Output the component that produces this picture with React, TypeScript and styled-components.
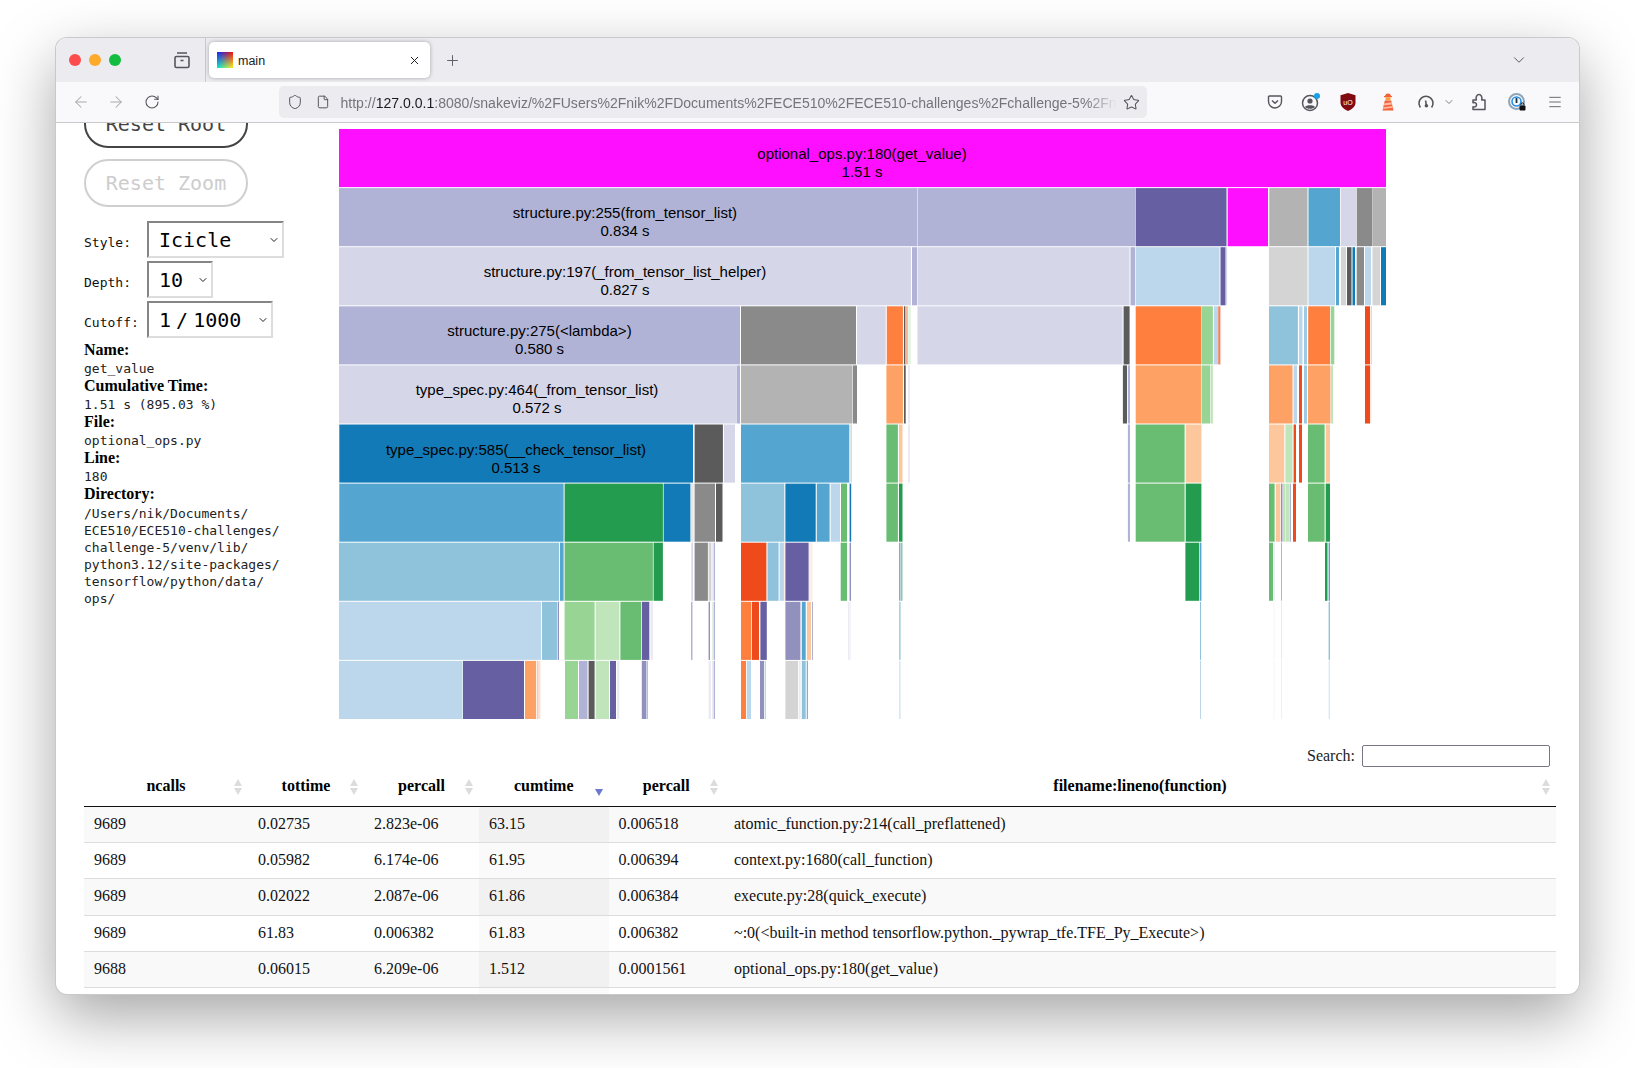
import * as React from 'react';
import styled, { createGlobalStyle } from 'styled-components';
import { ArrowLeft, ArrowRight, ChevronDown, File, Menu, Plus, RotateCw, Shield, Star, X } from 'lucide-react';

const GlobalStyle = createGlobalStyle`
  html, body {
    margin: 0;
    padding: 0;
    background: #fff;
  }
`;

const MONO = '"DejaVu Sans Mono", "Liberation Mono", monospace';
const SERIF = '"Liberation Serif", serif';
const SANS = '"Liberation Sans", Arial, sans-serif';

const Stage = styled.div`
  width: 1635px;
  height: 1068px;
  padding: 38px 56px 74px;
  box-sizing: border-box;
  overflow: hidden;
`;

const Window = styled.div`
  height: 956px;
  border-radius: 11px;
  overflow: hidden;
  background: #fff;
  box-shadow: 0 0 0 1px #c9c9cb, 0 22px 62px rgba(0, 0, 0, 0.36);
  display: flex;
  flex-direction: column;
`;

const TabBar = styled.div`
  height: 44px;
  flex: none;
  display: flex;
  align-items: center;
  background: #ecebf0;
  box-sizing: border-box;
  padding-left: 13px;
`;

const Light = styled.span<{ $color: string }>`
  width: 12px;
  height: 12px;
  border-radius: 50%;
  margin-right: 8px;
  background: ${(p) => p.$color};
`;

const ViewButton = styled.div`
  width: 20px;
  height: 20px;
  margin-left: 43px;
  color: #55555d;
`;

const TabDivider = styled.div`
  width: 1px;
  height: 44px;
  margin-left: 13px;
  background: #c9c9ce;
`;

const Tab = styled.div`
  width: 221px;
  height: 36px;
  margin-left: 3px;
  box-sizing: border-box;
  padding: 0 9px 0 8px;
  border-radius: 5px;
  background: #fff;
  box-shadow: 0 0 4px rgba(0, 0, 0, 0.3);
  display: flex;
  align-items: center;
  font: 12.5px ${SANS};
  color: #1c1b22;
`;

const Favicon = styled.span`
  position: relative;
  width: 16px;
  height: 16px;
  margin-right: 5px;
  background: linear-gradient(to right, #0a2bff, #f01010);
  &::after {
    content: '';
    position: absolute;
    inset: 0;
    background: linear-gradient(to right, #00e8d0, #f8f020);
    mask-image: linear-gradient(to bottom, transparent, #000);
    -webkit-mask-image: linear-gradient(to bottom, transparent, #000);
  }
`;

const TabTitle = styled.span`
  flex: 1;
  padding-top: 2px;
`;

const NewTab = styled.div`
  margin-left: 14px;
  color: #55555d;
  display: flex;
`;

const TabMenu = styled.div`
  margin-left: auto;
  margin-right: 51px;
  color: #55555d;
  display: flex;
`;

const Toolbar = styled.div`
  height: 41px;
  flex: none;
  box-sizing: border-box;
  padding-left: 7px;
  border-bottom: 1px solid #c9c9cb;
  background: #f9f9fb;
  display: flex;
  align-items: center;
`;

const Slot = styled.div<{ $w: number; $color?: string; $gap?: number }>`
  width: ${(p) => p.$w}px;
  height: 24px;
  flex: none;
  margin-left: ${(p) => p.$gap || 0}px;
  display: flex;
  align-items: center;
  justify-content: center;
  color: ${(p) => p.$color || '#55555d'};
`;

const UrlBar = styled.div`
  width: 868px;
  height: 32px;
  flex: none;
  margin: 0 110px 0 109px;
  box-sizing: border-box;
  padding-left: 7px;
  border-radius: 5px;
  background: #ecebef;
  display: flex;
  align-items: center;
  color: #55555d;
`;

const UrlText = styled.div`
  width: 776px;
  margin-left: 9px;
  padding-top: 2px;
  flex: none;
  overflow: hidden;
  white-space: nowrap;
  font: 14.05px ${SANS};
  color: #74747c;
  -webkit-mask-image: linear-gradient(to right, #000 96%, transparent 100%);
  mask-image: linear-gradient(to right, #000 96%, transparent 100%);
`;

const UrlHost = styled.span`
  color: #1c1b22;
`;

const Page = styled.div`
  flex: 1;
  min-height: 0;
  overflow: hidden;
  padding-left: 28px;
  padding-right: 23px;
`;

const Top = styled.div`
  display: flex;
  align-items: flex-start;
`;

const Sidebar = styled.div`
  width: 255px;
  flex: none;
  margin-top: -23px;
`;

const Button = styled.button<{ $off?: boolean }>`
  display: block;
  width: 164px;
  height: 48px;
  margin-bottom: 11px;
  padding: 0;
  background: #fff;
  border: 2px solid ${(p) => (p.$off ? '#cfcfcf' : '#444')};
  border-radius: 24px;
  font: 20px ${MONO};
  color: ${(p) => (p.$off ? '#cdcdcd' : '#444')};
`;

const Controls = styled.div`
  padding-top: 3px;
`;

const Field = styled.div`
  display: flex;
  align-items: baseline;
  margin-bottom: 3px;
`;

const FieldLabel = styled.label`
  width: 63px;
  flex: none;
  font: 13px ${MONO};
  color: #111;
`;

const SelectBox = styled.div<{ $w: number }>`
  position: relative;
  width: ${(p) => p.$w}px;
  height: 37px;
`;

const Select = styled.select<{ $tight?: boolean }>`
  width: 100%;
  height: 100%;
  box-sizing: border-box;
  appearance: none;
  background: #fff;
  border-radius: 0;
  border-width: 2px;
  border-style: solid;
  border-color: #858585 #ddd #ddd #858585;
  padding: 0 0 0 10px;
  font: 20px ${MONO};
  color: #000;
  word-spacing: ${(p) => (p.$tight ? '-7px' : '0')};
`;

const Caret = styled.span`
  position: absolute;
  right: 4px;
  top: 13px;
  display: flex;
  color: #222;
  pointer-events: none;
`;

const Info = styled.div`
  margin-top: 1px;
`;

const InfoLabel = styled.div`
  font: bold 16px/18px ${SERIF};
  color: #000;
`;

const InfoValue = styled.div`
  font: 13px/18px ${MONO};
  color: #222;
  padding-top: 1px;
  margin-bottom: -1px;
`;

const DirList = styled.div`
  margin-top: 2px;
`;

const DirLine = styled.div`
  font: 13px/17px ${MONO};
  color: #222;
`;

const Chart = styled.svg`
  display: block;
  flex: none;
  margin-top: 6px;
`;

const ChartLabel = styled.text`
  font: 15px ${SANS};
  fill: #000;
  text-anchor: middle;
`;

const SearchRow = styled.div`
  margin-top: 25px;
  padding-right: 6px;
  display: flex;
  justify-content: flex-end;
  align-items: center;
  gap: 7px;
  font: 16px ${SERIF};
  color: #222;
`;

const SearchInput = styled.input`
  width: 188px;
  height: 22px;
  box-sizing: border-box;
  border: 1px solid #767686;
  border-radius: 2px;
  background: #fff;
  padding: 0 4px;
`;

const Table = styled.table`
  width: 1472px;
  table-layout: fixed;
  border-collapse: separate;
  border-spacing: 0;
  font: 16px ${SERIF};
  color: #111;
`;

const Head = styled.th`
  position: relative;
  height: 40px;
  box-sizing: border-box;
  padding: 0 0 2px;
  border-bottom: 1px solid #111;
  font: bold 16px ${SERIF};
  color: #000;
  text-align: center;
`;

const Arrows = styled.svg`
  position: absolute;
  right: 5px;
  top: 12px;
`;

const Row = styled.tr``;

const Cell = styled.td<{ $odd: boolean; $sorted?: boolean }>`
  height: 36.2px;
  box-sizing: border-box;
  padding: 0 0 1px 10px;
  border-bottom: 1px solid #ddd;
  white-space: nowrap;
  background: ${(p) =>
    p.$sorted ? (p.$odd ? '#f1f1f1' : '#fafafa') : p.$odd ? '#f9f9f9' : '#fff'};
`;

const MAGENTA = '#ff0fff';
const LAV = '#b1b3d6';
const LTLAV = '#d5d6e8';
const PURPLE = '#6660a3';
const MPURPLE = '#9290bd';
const G3 = '#b3b3b3';
const G8 = '#8a8a8a';
const G5 = '#5b5b5b';
const GD = '#d4d4d4';
const BLUE = '#54a6d0';
const DBLUE = '#127ab6';
const LBLUE = '#bcd7ec';
const MBLUE = '#8fc3dc';
const ORANGE = '#fe7f3e';
const LORANGE = '#fda264';
const PEACH = '#fdc79e';
const RED = '#ee4a1b';
const DGREEN = '#249c4f';
const GREEN = '#69bd72';
const LGREEN = '#98d594';
const PGREEN = '#c0e5bb';
const PALE = '#ecebf3';
const PALEB = '#dbe8f3';

type Block = [number, number, string];

const ROWS: Block[][] = [
  [[339, 1386, MAGENTA]],
  [
    [339, 917, LAV], [917.5, 1135, LAV], [1135.6, 1226.5, PURPLE], [1227.7, 1268, MAGENTA],
    [1269.3, 1307.5, G3], [1308.5, 1340, BLUE], [1340.7, 1356, LTLAV], [1356.7, 1372.5, G8], [1373, 1386, G3],
  ],
  [
    [339, 911, LTLAV], [912, 917, LAV], [917.5, 1129.5, LTLAV], [1130.5, 1135, LAV],
    [1135.6, 1219.5, LBLUE], [1220.5, 1225.5, PURPLE], [1226, 1227, LTLAV],
    [1269, 1307.5, GD], [1308.5, 1335, LBLUE], [1336, 1339, BLUE], [1341, 1346, GD], [1347, 1351.5, G5],
    [1352.5, 1355, DBLUE], [1356.7, 1364, G8], [1365, 1371, LBLUE], [1372.5, 1380, GD], [1381, 1386, DBLUE],
  ],
  [
    [339, 740, LAV], [741, 856, G8], [857, 885.7, LTLAV], [886.8, 902.9, ORANGE], [904, 905.4, G5],
    [905.6, 907.9, '#f5b49a'], [908, 911, '#e6f4e4'], [917.5, 1122.5, LTLAV], [1123.6, 1129.6, G5],
    [1135.7, 1201.4, ORANGE], [1202, 1212.9, LGREEN], [1214, 1218, LBLUE], [1218.2, 1220.4, '#f2825c'],
    [1269, 1297.9, MBLUE], [1299, 1302.5, LBLUE], [1304, 1307, '#9fcbe2'], [1308.2, 1330, ORANGE],
    [1330.7, 1334.3, LGREEN], [1365, 1370, RED], [1370.7, 1372, '#fbd3bd'],
  ],
  [
    [339, 736, LTLAV], [736.5, 740, LAV], [741, 852.5, G3], [853, 857, G8], [886.4, 902.9, LORANGE],
    [904, 905.7, G5], [908, 910, PALE], [1122.9, 1127, G5], [1127.9, 1130, LAV],
    [1135.7, 1201.4, LORANGE], [1202, 1210, LGREEN], [1210.4, 1212.9, PGREEN], [1269, 1292.5, LORANGE],
    [1293.6, 1297, LBLUE], [1299, 1302, RED], [1304, 1307, '#9fcbe2'], [1308, 1330.4, LORANGE],
    [1331, 1333, PGREEN], [1365, 1370, RED], [1370.5, 1371.3, '#fbd3bd'],
  ],
  [
    [339.3, 693, DBLUE], [694.6, 722.9, G5], [724, 735, LTLAV], [741, 849.3, BLUE], [850.4, 851.8, GD],
    [886.4, 897.9, GREEN], [899, 902.5, PEACH], [908, 910, PALE], [1127.9, 1130, LAV], [1135.7, 1184.6, GREEN],
    [1185.7, 1201.4, PEACH], [1269, 1284.3, PEACH], [1285.4, 1292.5, PGREEN], [1293.6, 1296, RED],
    [1299, 1302, RED], [1308, 1324.6, GREEN], [1325.7, 1330, PEACH],
  ],
  [
    [339.3, 563.6, BLUE], [564.6, 662.9, DGREEN], [663.6, 690.4, DBLUE], [691, 693.6, '#e3e8e5'], [694.6, 715, G8],
    [716, 722.5, G5], [741, 784.3, MBLUE], [785.4, 815.7, DBLUE], [816.8, 829.6, BLUE], [830.7, 840, LBLUE],
    [841, 847, GREEN], [849.6, 851.2, DBLUE], [886.4, 897.9, GREEN], [899, 902.5, DGREEN], [1127.9, 1130, LAV],
    [1135.7, 1184.6, GREEN], [1185.7, 1201.4, DGREEN], [1269, 1274.6, GREEN], [1275.7, 1280.4, PEACH],
    [1281, 1282.5, MPURPLE], [1283, 1285.4, PGREEN], [1285.7, 1289, PGREEN], [1289.6, 1291, LAV],
    [1293, 1296, RED], [1308, 1324.6, GREEN], [1325.7, 1330, DGREEN],
  ],
  [
    [339, 559, MBLUE], [560, 563.6, BLUE], [564.6, 652.9, GREEN], [653.6, 662.9, DGREEN], [691.4, 693, LTLAV],
    [694.6, 707.9, G8], [708.6, 711.4, GD], [712, 713, PALE], [713.6, 715, LAV], [741, 766.4, RED],
    [767.5, 778.6, MBLUE], [779.6, 783, LBLUE], [783, 784.3, '#f8c9b0'], [785.4, 808.6, PURPLE],
    [809, 812.5, '#fbeee8'], [840.7, 847, GREEN], [849.6, 851, MPURPLE], [899, 900.4, '#8ea6d8'],
    [900.7, 902.5, '#8cc4ae'], [1185.4, 1199.3, DGREEN], [1200, 1201.4, BLUE], [1269, 1273, GREEN],
    [1273.5, 1275, PALE], [1281, 1282, LAV], [1325, 1327.5, DGREEN], [1328.6, 1330, BLUE],
  ],
  [
    [339, 541, LBLUE], [542, 557.5, MBLUE], [558, 559, MPURPLE], [564.6, 594.6, LGREEN], [595.7, 619.3, PGREEN],
    [620.4, 641, GREEN], [641.8, 649.3, PURPLE], [650.4, 653, PALE], [691, 692.5, LAV], [708.6, 710, MPURPLE],
    [712, 713, '#e3efdf'], [713.6, 715, LAV], [741, 751, ORANGE], [751.8, 759, RED], [760.4, 766.8, PURPLE],
    [785.4, 800.4, MPURPLE], [801.8, 805.7, BLUE], [807, 811, PEACH], [812, 813, LAV], [848, 849.3, PALE],
    [849.6, 850.6, PALE], [899, 900.7, '#a8d4e2'], [1200, 1201, MBLUE], [1273.5, 1274.5, '#f6f6fa'],
    [1281, 1282, PALE], [1328.6, 1330, MBLUE],
  ],
  [
    [339, 462.5, LBLUE], [463, 524, PURPLE], [525, 536, LORANGE], [536.8, 538.6, '#fdc7ac'], [539, 540.4, '#fde0cf'],
    [565, 578, LGREEN], [579, 587.5, LAV], [588.6, 594.6, G5], [595.7, 609, PGREEN], [610, 616, PURPLE],
    [617, 619.3, PALE], [641.8, 646.4, MPURPLE], [646.8, 648, '#a6c5e2'], [708.6, 711, PALE], [712, 713, PALE],
    [713.6, 715, LAV], [741, 746, ORANGE], [746.8, 751, LBLUE], [760, 764, MPURPLE], [764.6, 766, LBLUE],
    [785.4, 798, GD], [798.7, 800.6, PALE], [801.8, 805.7, MBLUE], [806.8, 807.8, BLUE], [899, 900.7, PALEB],
    [1200, 1201, LBLUE], [1273.5, 1274.5, '#f6f6fa'], [1281, 1282, '#eef1f7'], [1328.6, 1330, PALEB],
  ],
];

const LABELS: [number, number, string, string][] = [
  [0, 862, 'optional_ops.py:180(get_value)', '1.51 s'],
  [1, 625, 'structure.py:255(from_tensor_list)', '0.834 s'],
  [2, 625, 'structure.py:197(_from_tensor_list_helper)', '0.827 s'],
  [3, 539.5, 'structure.py:275(<lambda>)', '0.580 s'],
  [4, 537, 'type_spec.py:464(_from_tensor_list)', '0.572 s'],
  [5, 516, 'type_spec.py:585(__check_tensor_list)', '0.513 s'],
];

const CHART_TOP = 129;
const ROW_H = 59.1;

function Icicle() {
  return (
    <Chart width={1050} height={591} viewBox={`339 ${CHART_TOP} 1050 591`}>
      {ROWS.map((blocks, r) =>
        blocks.map(([x0, x1, color], i) => (
          <rect
            key={`${r}-${i}`}
            x={x0}
            y={CHART_TOP + r * ROW_H}
            width={x1 - x0}
            height={ROW_H - 1}
            fill={color}
          />
        ))
      )}
      {LABELS.map(([r, x, name, time]) => (
        <g key={name}>
          <ChartLabel x={x} y={CHART_TOP + r * ROW_H + 30}>{name}</ChartLabel>
          <ChartLabel x={x} y={CHART_TOP + r * ROW_H + 48}>{time}</ChartLabel>
        </g>
      ))}
    </Chart>
  );
}

const COLUMNS: [string, number][] = [
  ['ncalls', 164],
  ['tottime', 116],
  ['percall', 115],
  ['cumtime', 129.5],
  ['percall', 115.5],
  ['filename:lineno(function)', 832],
];

const STATS = [
  ['9689', '0.02735', '2.823e-06', '63.15', '0.006518', 'atomic_function.py:214(call_preflattened)'],
  ['9689', '0.05982', '6.174e-06', '61.95', '0.006394', 'context.py:1680(call_function)'],
  ['9689', '0.02022', '2.087e-06', '61.86', '0.006384', 'execute.py:28(quick_execute)'],
  ['9689', '61.83', '0.006382', '61.83', '0.006382', '~:0(<built-in method tensorflow.python._pywrap_tfe.TFE_Py_Execute>)'],
  ['9688', '0.06015', '6.209e-06', '1.512', '0.0001561', 'optional_ops.py:180(get_value)'],
  ['', '', '', '', '', ''],
];

function SortArrows({ sorted }: { sorted: boolean }) {
  return (
    <Arrows width={10} height={17} viewBox="0 0 10 17">
      {sorted ? (
        <path d="M1 10h8l-4 7z" fill="#6a78cf" />
      ) : (
        <>
          <path d="M1 7h8L5 0z" fill="#dcdcdc" />
          <path d="M1 9h8l-4 7z" fill="#dcdcdc" />
        </>
      )}
    </Arrows>
  );
}

const DIRECTORY = [
  '/Users/nik/Documents/',
  'ECE510/ECE510-challenges/',
  'challenge-5/venv/lib/',
  'python3.12/site-packages/',
  'tensorflow/python/data/',
  'ops/',
];

export default function App() {
  return (
    <Stage>
      <GlobalStyle />
      <Window>
        <TabBar>
          <Light $color="#fd4c4c" />
          <Light $color="#fda92a" />
          <Light $color="#12bd3f" />
          <ViewButton>
            <svg width="20" height="20" viewBox="0 0 20 20" fill="none" stroke="currentColor" strokeWidth="1.6">
              <path d="M5 3h10" />
              <rect x="3" y="6.5" width="14" height="11" rx="1.5" />
              <path d="M8.5 10.5h3" />
            </svg>
          </ViewButton>
          <TabDivider />
          <Tab>
            <Favicon />
            <TabTitle>main</TabTitle>
            <X size={13} strokeWidth={1.8} color="#1c1b22" />
          </Tab>
          <NewTab>
            <Plus size={17} strokeWidth={1.3} />
          </NewTab>
          <TabMenu>
            <ChevronDown size={18} strokeWidth={1.3} />
          </TabMenu>
        </TabBar>
        <Toolbar>
          <Slot $w={35.5} $color="#a9a9ae"><ArrowLeft size={18} strokeWidth={1.4} /></Slot>
          <Slot $w={35.5} $color="#a9a9ae"><ArrowRight size={18} strokeWidth={1.4} /></Slot>
          <Slot $w={35.5}><RotateCw size={16} strokeWidth={1.6} /></Slot>
          <UrlBar>
            <Slot $w={18}><Shield size={16} strokeWidth={1.5} /></Slot>
            <Slot $w={18} $gap={10}><File size={14} strokeWidth={1.7} /></Slot>
            <UrlText>
              http://<UrlHost>127.0.0.1</UrlHost>:8080/snakeviz/%2FUsers%2Fnik%2FDocuments%2FECE510%2FECE510-challenges%2Fchallenge-5%2Fn
            </UrlText>
            <Slot $w={22} $gap={4}><Star size={17} strokeWidth={1.5} /></Slot>
          </UrlBar>
          <Slot $w={36}>
            <svg width="16" height="16" viewBox="0 0 16 16" fill="none" stroke="currentColor" strokeWidth="1.4">
              <path d="M2.5 2h11c.6 0 1 .4 1 1v4.5a6.5 6.5 0 0 1-13 0V3c0-.6.4-1 1-1z" />
              <path d="M5 6.5L8 9.3l3-2.8" />
            </svg>
          </Slot>
          <Slot $w={36}>
            <svg width="22" height="22" viewBox="0 0 22 22" fill="none">
              <circle cx="10" cy="12" r="7.5" stroke="#55555d" strokeWidth="1.5" />
              <circle cx="10" cy="10" r="2.6" fill="#55555d" />
              <path d="M5 16c1-2.5 9-2.5 10 0-2 2.4-8 2.4-10 0z" fill="#55555d" />
              <circle cx="17" cy="5" r="3" fill="#1a9fe8" />
            </svg>
          </Slot>
          <Slot $w={38}>
            <svg width="18" height="20" viewBox="0 0 18 20">
              <path d="M9 1l7.5 2.2v7.3c0 4-3.2 6.8-7.5 8.5-4.3-1.7-7.5-4.5-7.5-8.5V3.2z" fill="#800c12" />
              <text x="9" y="12.5" textAnchor="middle" fontSize="7" fontFamily={SANS} fill="#fff">uO</text>
            </svg>
          </Slot>
          <Slot $w={42}>
            <svg width="16" height="20" viewBox="0 0 16 20">
              <path d="M8 1.5c-1.8 0-2.8 1-3 2.5h6c-.2-1.5-1.2-2.5-3-2.5z" fill="#f4603a" />
              <rect x="4" y="4" width="8" height="1.2" fill="#f4603a" />
              <rect x="5.5" y="5.2" width="5" height="3" fill="#f9a03f" />
              <path d="M4.8 8.5h6.4l2.3 10h-11z" fill="#f4603a" />
              <path d="M4.3 11.2l7.3-1 .5 2.2-8.4 1.2zM3.4 15.2l9.2-1.2.4 1.8-10 1.3z" fill="#fbb9a0" />
            </svg>
          </Slot>
          <Slot $w={34.5}>
            <svg width="18" height="18" viewBox="0 0 18 18" fill="none" stroke="currentColor" strokeWidth="1.6">
              <path d="M3.4 14.5a7 7 0 1 1 11.2 0" />
              <circle cx="9.4" cy="12.8" r="1.8" fill="currentColor" stroke="none" />
              <path d="M9.4 12.8L8.6 7.5" />
            </svg>
          </Slot>
          <Slot $w={12}><ChevronDown size={12} strokeWidth={1.5} /></Slot>
          <Slot $w={47}>
            <svg width="16" height="18" viewBox="0 0 16 18" fill="none" stroke="currentColor" strokeWidth="1.5" strokeLinejoin="round">
              <path d="M2 16.5h12V7h-3.3c.8-3-.6-5.5-2.7-5.5S4.5 4 5.3 7H2v2.7c2-.8 3.5.3 3.5 2s-1.5 2.8-3.5 2.1z" />
            </svg>
          </Slot>
          <Slot $w={29}>
            <svg width="20" height="20" viewBox="0 0 20 20" fill="none">
              <circle cx="9.5" cy="9.5" r="7.5" stroke="#8fa6b8" strokeWidth="2" />
              <circle cx="9.5" cy="9.5" r="4.5" stroke="#2a8fe0" strokeWidth="1.6" />
              <path d="M9.5 6v5" stroke="#14324a" strokeWidth="1.8" />
              <rect x="12.5" y="13.5" width="6" height="5" rx="1" fill="#111" />
              <path d="M14 13.5v-1.2a1.5 1.5 0 0 1 3 0v1.2" stroke="#111" strokeWidth="1" />
            </svg>
          </Slot>
          <Slot $w={48}><Menu size={16} strokeWidth={1.3} /></Slot>
        </Toolbar>
        <Page>
          <Top>
            <Sidebar>
              <Button>Reset Root</Button>
              <Button $off>Reset Zoom</Button>
              <Controls>
                <Field>
                  <FieldLabel>Style:</FieldLabel>
                  <SelectBox $w={137}>
                    <Select defaultValue="Icicle"><option>Icicle</option><option>Sunburst</option></Select>
                    <Caret><ChevronDown size={12} strokeWidth={2} /></Caret>
                  </SelectBox>
                </Field>
                <Field>
                  <FieldLabel>Depth:</FieldLabel>
                  <SelectBox $w={66}>
                    <Select defaultValue="10"><option>10</option></Select>
                    <Caret><ChevronDown size={12} strokeWidth={2} /></Caret>
                  </SelectBox>
                </Field>
                <Field>
                  <FieldLabel>Cutoff:</FieldLabel>
                  <SelectBox $w={126}>
                    <Select $tight defaultValue="1 / 1000"><option>1 / 1000</option></Select>
                    <Caret><ChevronDown size={12} strokeWidth={2} /></Caret>
                  </SelectBox>
                </Field>
              </Controls>
              <Info>
                <InfoLabel>Name:</InfoLabel>
                <InfoValue>get_value</InfoValue>
                <InfoLabel>Cumulative Time:</InfoLabel>
                <InfoValue>1.51 s (895.03 %)</InfoValue>
                <InfoLabel>File:</InfoLabel>
                <InfoValue>optional_ops.py</InfoValue>
                <InfoLabel>Line:</InfoLabel>
                <InfoValue>180</InfoValue>
                <InfoLabel>Directory:</InfoLabel>
                <DirList>
                  {DIRECTORY.map((line) => (
                    <DirLine key={line}>{line}</DirLine>
                  ))}
                </DirList>
              </Info>
            </Sidebar>
            <Icicle />
          </Top>
          <SearchRow>
            <span>Search:</span>
            <SearchInput />
          </SearchRow>
          <Table>
            <colgroup>
              {COLUMNS.map(([name, w], i) => (
                <col key={i} width={w} />
              ))}
            </colgroup>
            <thead>
              <tr>
                {COLUMNS.map(([name], i) => (
                  <Head key={i}>
                    {name}
                    <SortArrows sorted={i === 3} />
                  </Head>
                ))}
              </tr>
            </thead>
            <tbody>
              {STATS.map((row, r) => (
                <Row key={r}>
                  {row.map((value, c) => (
                    <Cell key={c} $odd={r % 2 === 0} $sorted={c === 3}>{value}</Cell>
                  ))}
                </Row>
              ))}
            </tbody>
          </Table>
        </Page>
      </Window>
    </Stage>
  );
}
